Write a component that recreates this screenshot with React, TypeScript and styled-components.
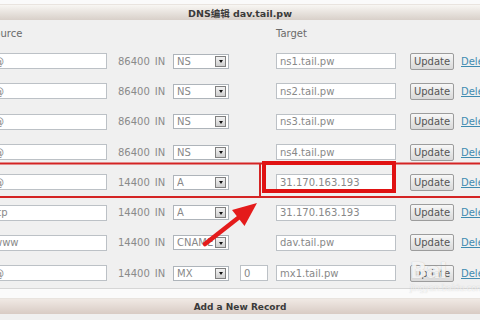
import React from "react";
import styled, { createGlobalStyle } from "styled-components";

const GlobalStyle = createGlobalStyle`
  html, body { margin: 0; padding: 0; background: #f0f0f0; }
  body { font-family: "DejaVu Sans", Verdana, sans-serif; }
`;

const Frame = styled.div`
  position: relative;
  width: 480px;
  height: 320px;
  overflow: hidden;
  background: #f0f0f0;
`;

const TopStrip = styled.div`
  height: 4px;
  background: #fafafa;
`;

const Bar = styled.div<{ $tone?: "title" | "add" }>`
  height: 16px;
  display: flex;
  align-items: center;
  justify-content: center;
  box-sizing: border-box;
  border-top: 1px solid #e9e4df;
  background: ${(p) =>
    p.$tone === "add"
      ? "linear-gradient(#f0e9e4, #d8cbc4)"
      : "linear-gradient(#f8f6f3, #d8d0c9)"};
  color: #3a3a3a;
  font-weight: bold;
  font-size: ${(p) => (p.$tone === "add" ? "9px" : "9.5px")};
  font-family: "DejaVu Sans", "Noto Sans CJK SC", sans-serif;
`;

const Table = styled.div`
  margin-left: -10px;
  width: 490px;
  border-bottom: 1px solid #d6d6d6;
`;

const Grid = styled.div<{ $h: number }>`
  display: grid;
  grid-template-columns: 128px 55px 67px 36px 134px 51px 1fr;
  align-items: center;
  height: ${(p) => p.$h}px;
`;

const Label = styled.div<{ $shift?: number }>`
  font-size: 10px;
  color: #6a6a6a;
  margin-left: ${(p) => p.$shift ?? 0}px;
  align-self: start;
  padding-top: 8px;
  line-height: 12px;
`;

const Field = styled.input<{ $w: number }>`
  box-sizing: border-box;
  width: ${(p) => p.$w}px;
  height: 16px;
  margin: 0;
  padding: 0 3px;
  border: 1px solid #bcc1c6;
  background: #fff;
  color: #888;
  font-family: "DejaVu Sans", Verdana, sans-serif;
  font-size: 10px;
  outline: none;
`;

const Ttl = styled.div`
  font-size: 10px;
  color: #8a8a8a;
  display: flex;
  gap: 5px;
`;

const SelectBox = styled.div`
  box-sizing: border-box;
  width: 56px;
  height: 15px;
  border: 1px solid #aeb4ba;
  background: #fff;
  display: flex;
  align-items: center;
  padding-left: 3px;
  font-size: 10px;
  color: #888;
`;

const SelectText = styled.span`
  flex: 1;
  overflow: hidden;
  white-space: nowrap;
`;

const SelectArrow = styled.span`
  box-sizing: border-box;
  width: 11px;
  height: 11px;
  margin-right: 2px;
  border: 1px solid #808080;
  background: linear-gradient(#f2f2f2, #cfcfcf);
  display: flex;
  align-items: center;
  justify-content: center;
  &::after {
    content: "";
    width: 0;
    height: 0;
    border-left: 2.5px solid transparent;
    border-right: 2.5px solid transparent;
    border-top: 3px solid #111;
    margin-top: 1px;
  }
`;

const UpdateButton = styled.button`
  box-sizing: border-box;
  width: 44px;
  height: 17px;
  padding: 0;
  border: 1px solid #9c9c9c;
  border-radius: 2px;
  background: linear-gradient(#f7f7f7, #d9d9d9);
  color: #555;
  font-family: "DejaVu Sans", Verdana, sans-serif;
  font-size: 10px;
`;

const DeleteLink = styled.a`
  font-size: 10px;
  color: #3f8bb0;
  text-decoration: underline;
  white-space: nowrap;
`;

const WhiteGap = styled.div`
  height: 9px;
  background: #fbfbfb;
`;

const Overlay = styled.svg`
  position: absolute;
  left: 0;
  top: 0;
  pointer-events: none;
`;

const Watermark = styled.div`
  position: absolute;
  left: 410px;
  top: 258px;
  color: rgba(255, 255, 255, 0.85);
  font-family: "DejaVu Sans", sans-serif;
  font-weight: bold;
  text-shadow: 0 0 1px rgba(120, 120, 120, 0.5);
  pointer-events: none;
`;

const WmBig = styled.div`
  font-size: 22px;
  line-height: 26px;
  letter-spacing: -1px;
`;

const WmSmall = styled.div`
  font-size: 8px;
  font-weight: normal;
  line-height: 10px;
  opacity: 0.7;
`;

type Rec = { name: string; ttl: string; type: string; prio?: string; target: string };

const records: Rec[] = [
  { name: "@", ttl: "86400", type: "NS", target: "ns1.tail.pw" },
  { name: "@", ttl: "86400", type: "NS", target: "ns2.tail.pw" },
  { name: "@", ttl: "86400", type: "NS", target: "ns3.tail.pw" },
  { name: "@", ttl: "86400", type: "NS", target: "ns4.tail.pw" },
  { name: "@", ttl: "14400", type: "A", target: "31.170.163.193" },
  { name: "ftp", ttl: "14400", type: "A", target: "31.170.163.193" },
  { name: "www", ttl: "14400", type: "CNAME", target: "dav.tail.pw" },
  { name: "@", ttl: "14400", type: "MX", prio: "0", target: "mx1.tail.pw" },
];

export default function App() {
  return (
    <>
      <GlobalStyle />
      <Frame>
        <TopStrip />
        <Bar $tone="title">DNS编辑 dav.tail.pw</Bar>
        <Table>
          <Grid $h={26}>
            <Label $shift={-2}>Source</Label>
            <span />
            <span />
            <span />
            <Label>Target</Label>
          </Grid>
          {records.map((r, i) => (
            <Grid $h={30.3} key={i}>
              <Field $w={117} readOnly value={r.name} />
              <Ttl>
                <span>{r.ttl}</span>
                <span>IN</span>
              </Ttl>
              <SelectBox>
                <SelectText>{r.type}</SelectText>
                <SelectArrow />
              </SelectBox>
              {r.prio !== undefined ? <Field $w={28} readOnly value={r.prio} /> : <span />}
              <Field $w={120} readOnly value={r.target} />
              <UpdateButton>Update</UpdateButton>
              <DeleteLink>Delete</DeleteLink>
            </Grid>
          ))}
        </Table>
        <WhiteGap />
        <Bar $tone="add">Add a New Record</Bar>
        <Overlay width="480" height="320" viewBox="0 0 480 320">
          <line x1="0" y1="163.5" x2="480" y2="163.5" stroke="#d42424" strokeWidth="2" />
          <line x1="0" y1="197" x2="480" y2="197" stroke="#d42424" strokeWidth="2" />
          <line x1="260" y1="163" x2="260" y2="197" stroke="#d42424" strokeWidth="2" />
          <rect x="264" y="163" width="130" height="28" fill="none" stroke="#e01212" strokeWidth="4" />
          <line x1="205" y1="244" x2="240" y2="216.5" stroke="#e41b1b" strokeWidth="4.5" strokeLinecap="round" />
          <polygon points="257,203 244.5,226 232,210" fill="#e41b1b" />
        </Overlay>
        <Watermark>
          <WmBig>Bai</WmBig>
          <WmSmall>jingyan.baidu.com</WmSmall>
        </Watermark>
      </Frame>
    </>
  );
}
